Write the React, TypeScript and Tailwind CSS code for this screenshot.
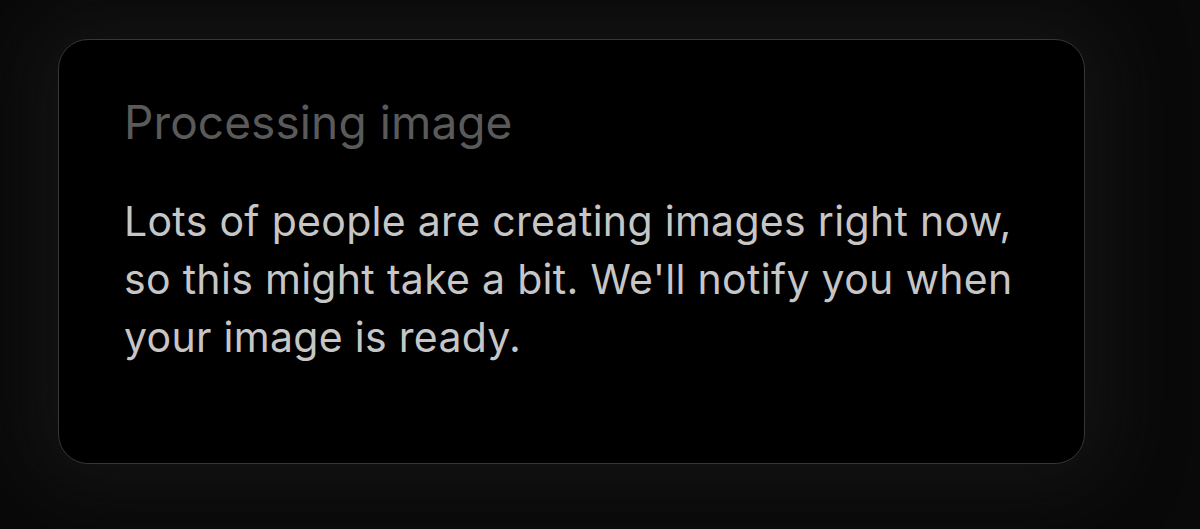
import React from 'react';

export default function App() {
  return (
    <div className="w-[1200px] h-[529px] bg-[#090909] overflow-hidden" style={{ fontFamily: 'Inter, "Noto Sans", sans-serif' }}>
      <div className="pt-[39px] pl-[58px]">
        <div className="w-[1027px] h-[425px] rounded-[30px] border-[1.5px] border-[#363636] bg-black shadow-[0_0_70px_24px_rgba(24,24,24,0.7)] pl-[65px] pr-[30px] pt-[54px]">
          <h1 className="text-[46px] leading-[56px] text-[#5a5a5a] font-normal tracking-[0.1px]">Processing image</h1>
          <p className="mt-[42px] text-[41px] leading-[58px] text-[#c6c6c6] tracking-[0.3px] max-w-[910px]">
            Lots of people are creating images right now, so this might take a bit. We'll notify you when your image is ready.
          </p>
        </div>
      </div>
    </div>
  );
}
